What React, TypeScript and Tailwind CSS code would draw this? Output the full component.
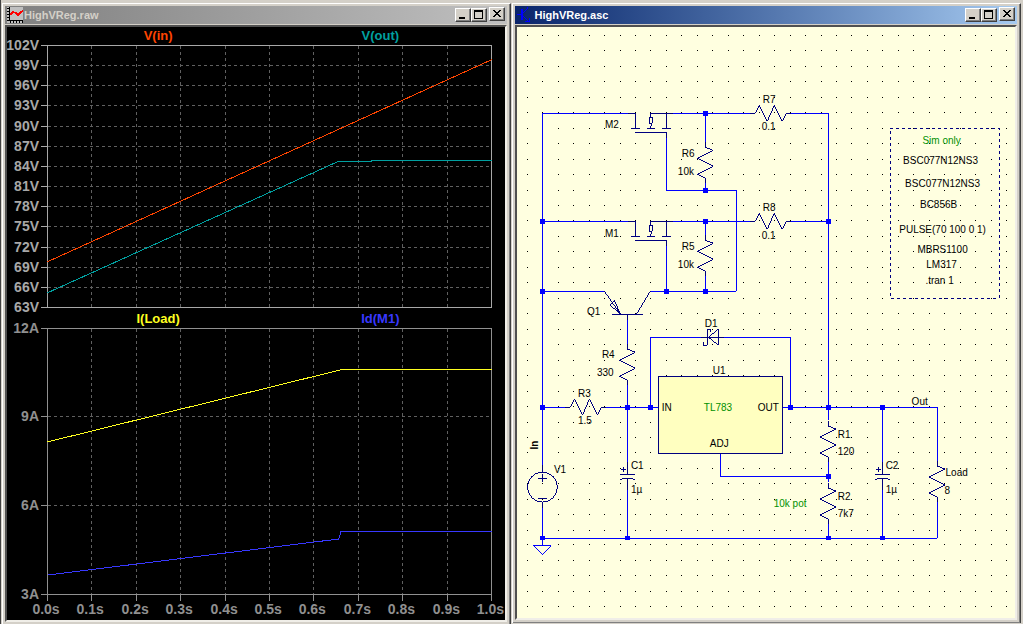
import type { ReactNode } from "react";

interface WindowProps {
  title: string;
  active?: boolean;
  icon: ReactNode;
  children: ReactNode;
}

const CaptionButton = ({ label, children }: { label: string; children: ReactNode }) => (
  <button
    type="button"
    aria-label={label}
    className="h-[14px] w-4 border border-t-white border-l-white border-r-[#404040] border-b-[#404040] bg-[#d4d0c8] shadow-[inset_-1px_-1px_0_#808080]"
  >
    <svg viewBox="0 0 14 12" className="block h-3 w-[14px]" shapeRendering="crispEdges">
      {children}
    </svg>
  </button>
);

const Window = ({ title, active, icon, children }: WindowProps) => (
  <div className="min-w-0 border-t border-l border-r border-t-white border-l-white border-r-[#404040]">
    <section className="border-r border-b border-[#808080] p-0.5">
      <header
        className={`flex h-[18px] items-center gap-px bg-linear-to-r px-0.5 ${
          active ? "from-[#0a246a] to-[#a6caf0]" : "from-[#808080] to-[#c0c0c0]"
        }`}
      >
        {icon}
        <h2
          className={`flex-1 truncate text-[11px] leading-4 font-bold ${
            active ? "text-white" : "text-[#d4d0c8]"
          }`}
        >
          {title}
        </h2>
        <div className="flex">
          <CaptionButton label="Minimize">
            <path d="M3 8h6v2H3z" />
          </CaptionButton>
          <CaptionButton label="Maximize">
            <path d="M2 1h9v9H2zM3 3v6h7V3z" fillRule="evenodd" />
          </CaptionButton>
        </div>
        <div className="pl-px">
          <CaptionButton label="Close">
            <path d="M3 2h2v1h1v1h2V3h1V2h2v1h-1v1H9v1H8v1h1v1h1v1h1v1H9V8H8V7H6v1H5v1H3V8h1V7h1V6h1V5H5V4H4V3H3z" />
          </CaptionButton>
        </div>
      </header>
      <div className="mt-px border-2 border-t-[#505050] border-l-[#505050] border-r-[#f0eee8] border-b-[#f0eee8]">
        {children}
      </div>
    </section>
  </div>
);

const PlotIcon = () => (
  <svg viewBox="0 0 16 16" className="h-4 w-4 shrink-0" shapeRendering="crispEdges">
    <rect width="16" height="16" fill="#c0c0c0" />
    <path
      d="M2.5 0v14M0 1.5h2M0 4.5h2M0 7.5h2M0 10.5h2M0 13.5h16M3.5 14v2M6.5 14v2M9.5 14v2M12.5 14v2M15.5 14v2"
      stroke="#000"
      fill="none"
    />
    <path d="M3 8l3-3 3 1 2 2 3-3 2-1" stroke="#f00" strokeWidth="1.5" fill="none" />
  </svg>
);

const SchematicIcon = () => (
  <svg viewBox="0 0 16 16" className="h-4 w-4 shrink-0" shapeRendering="crispEdges">
    <path d="M0 7.5h5M10 0v2L6 6M6 9l6 6M8 14.5h4v-4" stroke="#00f" fill="none" />
    <path d="M5 2v11" stroke="#00f" strokeWidth="2" />
  </svg>
);

/* ---------- waveform viewer ---------- */

const LEFT = 47;
const RIGHT = 491;
const times = Array.from({ length: 11 }, (_, i) => ({
  x: Math.round(LEFT + i * 44.4),
  label: `${(i / 10).toFixed(1)}s`,
}));

interface PlotProps {
  top: number;
  bottom: number;
  max: number;
  rows: number;
  unit: string;
  color: string;
  children: ReactNode;
}

const Plot = ({ top, bottom, max, rows, unit, color, children }: PlotProps) => {
  const ticks = Array.from({ length: rows + 1 }, (_, i) => ({
    y: Math.round(top + ((bottom - top) * i) / rows),
    value: max - i * 3,
  }));

  return (
    <g>
      <g transform="translate(.5 .5)" fill="none" shapeRendering="crispEdges">
        <g stroke="#606060" strokeDasharray="3 3">
          {ticks.slice(1, -1).map(({ y }) => (
            <path key={y} d={`M${LEFT} ${y}H${RIGHT}`} />
          ))}
          {times.slice(1, -1).map(({ x }) => (
            <path key={x} d={`M${x} ${top}V${bottom}`} />
          ))}
        </g>
        <g stroke={color}>
          <rect x={LEFT} y={top} width={RIGHT - LEFT} height={bottom - top} />
          {ticks.map(({ y }) => (
            <path key={y} d={`M40 ${y}H${LEFT}`} />
          ))}
        </g>
        {children}
      </g>
      <g fill={color} textAnchor="end" className="text-[14px] font-bold">
        {ticks.map(({ y, value }) => (
          <text key={y} x={39} y={y + 5}>
            {value}
            {unit}
          </text>
        ))}
      </g>
    </g>
  );
};

const Waveforms = () => (
  <svg viewBox="7 27 498 592" className="block w-full bg-black">
    <Plot top={45} bottom={307} max={102} rows={13} unit="V" color="#a8a8a8">
      <path d="M47 261L491 59" stroke="#ff4500" />
      <path d="M47 292L337 161H370L371 160H491" stroke="#00a0a0" />
    </Plot>
    <Plot top={328} bottom={593} max={12} rows={3} unit="A" color="#909090">
      <path d="M47 441L340 369H491" stroke="#ffff20" />
      <path d="M47 574L338 538L340 531H491" stroke="#3838ff" />
      {times.map(({ x }) => (
        <path key={x} d={`M${x} 593v7`} stroke="#909090" />
      ))}
    </Plot>
    <g textAnchor="middle" fill="#909090" className="text-[14px] font-bold">
      {times.map(({ x, label }) => (
        <text key={label} x={x - 1} y={613}>
          {label}
        </text>
      ))}
    </g>
    <g textAnchor="middle" className="text-[13px] font-bold">
      <text x={158} y={40} fill="#ff4500">V(in)</text>
      <text x={380} y={40} fill="#00a0a0">V(out)</text>
      <text x={158} y={323} fill="#ffff20">I(Load)</text>
      <text x={380} y={323} fill="#3838ff">Id(M1)</text>
    </g>
  </svg>
);

/* ---------- schematic ---------- */

let dots = "";
for (let row = 0; row < 38; row++) {
  for (let col = 0; col < 32; col++) {
    dots += `M${Math.floor(527.3 + col * 15.46)} ${Math.floor(35.3 + row * 15.47)}h1v1h-1z`;
  }
}

const wires = [
  "M542 465V113H628M672 113H751M790 113H828V420",
  "M542 221H628M672 221H751M790 221H828",
  "M705 113V143M705 182V190M666 138V190H736V291H650",
  "M705 221V236M705 275V291M666 246V291M542 291H604",
  "M627 320V345M627 384V462M542 407H566M604 407H658",
  "M650 407V337H701M724 337H790V407M782 407H937V462",
  "M720 453V476H828M828 461V482M828 523V538",
  "M882 407V462M882 490V538M627 490V538M937 500V538H542",
  "M542 508V546M533 546H551L542 555Z",
].join("");

const nodes = [
  [705, 113], [705, 190], [542, 221], [705, 221], [828, 221],
  [542, 291], [666, 291], [705, 291], [542, 407], [627, 407],
  [650, 407], [790, 407], [828, 407], [882, 407], [828, 476],
  [542, 538], [627, 538], [828, 538], [882, 538],
];

// x, y is the pin on the top / left side
const ResistorV = ({ x, y }: { x: number; y: number }) => (
  <path d={`M${x} ${y - 5}v5l8 3l-16 8l16 8l-16 8l8 4v5`} />
);

const ResistorH = ({ x, y }: { x: number; y: number }) => (
  <path d={`M${x - 5} ${y}h5l4 -8l8 16l7 -16l8 16l4 -8h5`} />
);

const Mosfet = ({ y }: { y: number }) => (
  <path
    d={`M628 ${y}h7v15M631 ${y + 15}h9M647 ${y + 15}h8M662 ${y + 15}h9M635 ${y + 19}h31v6M673 ${y}h-23v4h2v5l-2 6M650 ${y + 4}h-1v6h2M666 ${y}v15`}
  />
);

const Capacitor = ({ x }: { x: number }) => (
  <path
    d={`M${x} 462v12M${x - 7} 474h15M${x - 7} 480q2 -2 7 -2t8 2M${x} 478v12M${x - 6} 469h5M${x - 4} 467v5`}
  />
);

interface Label {
  x: number;
  y: number;
  text: string;
  green?: boolean;
}

const labels: Label[] = [
  { x: 605, y: 128, text: "M2" },
  { x: 682, y: 157, text: "R6" },
  { x: 678, y: 175, text: "10k" },
  { x: 763, y: 103, text: "R7" },
  { x: 762, y: 130, text: "0.1" },
  { x: 605, y: 237, text: "M1" },
  { x: 682, y: 250, text: "R5" },
  { x: 678, y: 268, text: "10k" },
  { x: 763, y: 211, text: "R8" },
  { x: 762, y: 239, text: "0.1" },
  { x: 587, y: 315, text: "Q1" },
  { x: 705, y: 327, text: "D1" },
  { x: 713, y: 374, text: "U1" },
  { x: 602, y: 358, text: "R4" },
  { x: 597, y: 376, text: "330" },
  { x: 578, y: 397, text: "R3" },
  { x: 578, y: 424, text: "1.5" },
  { x: 662, y: 411, text: "IN" },
  { x: 758, y: 411, text: "OUT" },
  { x: 710, y: 447, text: "ADJ" },
  { x: 704, y: 411, text: "TL783", green: true },
  { x: 554, y: 473, text: "V1" },
  { x: 631, y: 469, text: "C1" },
  { x: 631, y: 493, text: "1µ" },
  { x: 838, y: 438, text: "R1" },
  { x: 838, y: 455, text: "120" },
  { x: 838, y: 500, text: "R2" },
  { x: 838, y: 517, text: "7k7" },
  { x: 886, y: 469, text: "C2" },
  { x: 886, y: 493, text: "1µ" },
  { x: 946, y: 476, text: "Load" },
  { x: 945, y: 494, text: "8" },
  { x: 912, y: 405, text: "Out" },
  { x: 774, y: 507, text: "10k pot", green: true },
];

const notes: Label[] = [
  { x: 942, y: 144, text: "Sim only", green: true },
  { x: 941, y: 164, text: "BSC077N12NS3" },
  { x: 943, y: 187, text: "BSC077N12NS3" },
  { x: 939, y: 208, text: "BC856B" },
  { x: 943, y: 233, text: "PULSE(70 100 0 1)" },
  { x: 943, y: 253, text: "MBRS1100" },
  { x: 942, y: 268, text: "LM317" },
  { x: 940, y: 284, text: ".tran 1" },
];

const renderLabel = ({ x, y, text, green }: Label) => (
  <text key={`${x}-${y}`} x={x} y={y} fill={green ? "#009000" : "#000"}>
    {text}
  </text>
);

const Schematic = () => (
  <svg viewBox="517 27 498 592" className="block w-full bg-[#ffffe0]">
    <path d={dots} shapeRendering="crispEdges" />
    <g transform="translate(.5 .5)" fill="none" shapeRendering="crispEdges">
      <rect x={658} y={376} width={124} height={77} fill="#ffffc0" />
      <path d={wires} stroke="#00f" />
      <g stroke="#000080">
        <rect x={658} y={376} width={124} height={77} />
        <rect x={890} y={128} width={109} height={170} strokeDasharray="3 3" />
        <Mosfet y={113} />
        <Mosfet y={221} />
        <ResistorV x={705} y={147} />
        <ResistorV x={705} y={240} />
        <ResistorV x={627} y={349} />
        <ResistorV x={828} y={426} />
        <ResistorV x={828} y={488} />
        <ResistorV x={937} y={466} />
        <ResistorH x={755} y={113} />
        <ResistorH x={755} y={221} />
        <ResistorH x={570} y={407} />
        <Capacitor x={627} />
        <Capacitor x={882} />
        <path d="M604 291L620 314L610 305L614 300L620 314M612 314H643M636 314L650 291M627 314V320" />
        <path d="M701 337H724M710 332V329H707V345H703V342M718 329V345L708 337Z" />
        <circle cx={542} cy={487} r={15} />
        <path d="M542 465V472M542 502V508M538 478H547M542 474V482M538 498H547" />
      </g>
    </g>
    <g fill="#00f" shapeRendering="crispEdges">
      {nodes.map(([x, y]) => (
        <rect key={`${x}-${y}`} x={x - 2} y={y - 2} width={5} height={5} />
      ))}
    </g>
    <g className="text-[10px]">
      {labels.map(renderLabel)}
      <g textAnchor="middle">{notes.map(renderLabel)}</g>
      <text transform="translate(538 450) rotate(-90)" className="font-bold">
        In
      </text>
    </g>
  </svg>
);

export default function App() {
  return (
    <main className="grid min-h-screen grid-cols-[510fr_509fr] items-start gap-px border-l border-[#404040] bg-[#d4d0c8] pt-[3px] pr-0.5 font-['Liberation_Sans',Arial,sans-serif] pl-px">
      <Window title="HighVReg.raw" icon={<PlotIcon />}>
        <Waveforms />
      </Window>
      <Window title="HighVReg.asc" active icon={<SchematicIcon />}>
        <Schematic />
      </Window>
    </main>
  );
}
